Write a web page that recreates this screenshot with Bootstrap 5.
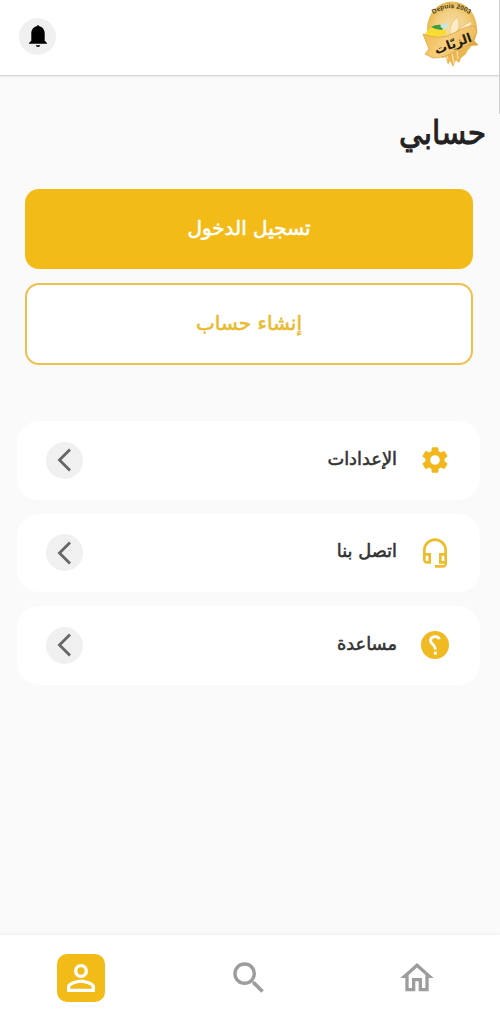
<!DOCTYPE html>
<html lang="ar" dir="rtl">
<head>
<meta charset="utf-8">
<meta name="viewport" content="width=device-width, initial-scale=1">
<title>حسابي</title>
<link href="https://cdn.jsdelivr.net/npm/bootstrap@5.3.0/dist/css/bootstrap.min.css" rel="stylesheet">
<style>
:root{--gold:#f2bb18}
body{background:#fafafa;font-family:"DejaVu Sans",sans-serif;color:#222;height:1024px;overflow:hidden}
.topbar{height:76px;border-bottom:1px solid #d4d4d4;box-shadow:0 1px 2px rgba(0,0,0,.08);padding:0 20px 3px 19px}
.round{width:37px;height:37px;background:#f0f0f0}
.page-title{font-family:"DejaVu Sans Condensed","DejaVu Sans",sans-serif;font-stretch:condensed;font-size:33px;line-height:40px;font-weight:400;-webkit-text-stroke:.9px currentColor;margin:37px 14px 0}
.actions{margin:36px 27px 0 25px;gap:14px}
.action{border-radius:14px;font-size:20px;font-weight:400;-webkit-text-stroke:.6px currentColor;border:0;padding:0 0 2px}
.action-login{height:80px;background:var(--gold)!important;color:#fff!important}
.action-join{height:82px;border:2px solid #eec04c;background:#fff!important;color:#eabb30!important}
.menu{margin:56px 20px 0 17px;gap:14px}
.menu-item{height:78.5px;border-radius:22px;padding:0 29px}
.menu-label{font-size:17.8px;font-weight:400;-webkit-text-stroke:.55px currentColor;color:#333;margin-right:22px;padding-bottom:2px}
.tabs{height:90px;border-top:1px solid #f3f3f3;box-shadow:0 -1px 3px rgba(0,0,0,.03);padding:0 63px 4px 57px}
.tab-search{margin-left:2px;margin-right:2px;padding-right:4px}
.tab-active{width:48px;height:48px;border-radius:10px;background:var(--gold)}
.scroll-thumb{width:1px;height:114px;background:#d0d0d0}
</style>
</head>
<body class="d-flex flex-column position-relative">
<div class="scroll-thumb position-absolute top-0 end-0" style="left:499px"></div>
<header class="topbar bg-white d-flex justify-content-between align-items-center flex-shrink-0">
  <svg class="align-self-start" width="60" height="68" viewBox="0 0 60 68" role="img" aria-label="الزيات">
    <defs>
      <radialGradient id="disc"><stop offset="0" stop-color="#f6dfae"/><stop offset=".65" stop-color="#f2d082"/><stop offset="1" stop-color="#e9ba50"/></radialGradient>
      <linearGradient id="ribbon" x2="1" y2=".3"><stop stop-color="#efb649"/><stop offset=".5" stop-color="#f6cf7e"/><stop offset="1" stop-color="#eebb5c"/></linearGradient>
      <path id="arc" d="M14 14Q31 2 49 14"/>
    </defs>
    <ellipse cx="32" cy="29" rx="25" ry="27.5" fill="url(#disc)"/>
    <path d="M18 52l4 6 4 -1 2 8 2-4 3 6 3-7 3 3 2-5 5-4 3-7z" fill="#e9b64f"/>
    <path d="M34 64l-2-11M38 59l-1-8M28 59l-2-7" stroke="#f8dda0" stroke-width="1.4"/>
    <path d="M31 38Q27 25 37 17Q43 25 33 40M34 38Q39 26 52 21Q51 33 34 40" fill="#fbebc6" stroke="#e3ba66" stroke-width=".7"/>
    <path d="M5 34Q10 25 23 25L27 34 6 40z" fill="#f8dc32"/>
    <path d="M11 27q7-4 14-1l-3 4q-6 0-11-3z" fill="#3d9b45"/><path d="M20 26q4-4 9-2l-5 6z" fill="#c9e5df"/>
    <path d="M3 34Q20 41 34 33T55 26L57 32 53 40 58 45Q47 44 36 51T13 58L5 54 9 49z" fill="url(#ribbon)" stroke="#dda342" stroke-width=".8"/>
    <path d="M53 40l-7 6 12-1z" fill="#dfa848"/>
    <text font-family="Liberation Sans, sans-serif" font-size="6.600" font-weight="700" fill="#4a4125" direction="ltr"><textPath href="#arc" startOffset="50%" text-anchor="middle">Depuis 2003</textPath></text>
    <text x="33" y="48" text-anchor="middle" transform="rotate(-20 33 44)" font-size="12.500" font-weight="700" fill="#211b0e">الزيّات</text>
  </svg>
  <button class="btn p-0 border-0 round rounded-circle d-flex align-items-center justify-content-center" aria-label="الإشعارات">
    <svg width="20" height="24" viewBox="0 0 20 24"><path d="M8.600 2.200a1.500 1.500 0 0 1 2.800 0C15 3 16.700 6 16.700 9.600v7.200l2.300 2.200v.8H1V19l2.300-2.200V9.600C3.300 6 5 3 8.600 2.200z"/><path d="M7.800 21.300h4.400a2.200 1.800 0 0 1-4.400 0z"/></svg>
  </button>
</header>
<main class="flex-grow-1">
  <h1 class="page-title">حسابي</h1>
  <div class="actions d-flex flex-column">
    <button class="btn action action-login">تسجيل الدخول</button>
    <button class="btn action action-join">إنشاء حساب</button>
  </div>
  <nav class="menu d-flex flex-column">
    <a class="menu-item bg-white d-flex align-items-center text-decoration-none" href="#">
      <svg width="32" height="32" viewBox="0 0 24 24" fill="#f2b81b"><path d="M19.140 12.940c.04-.3.060-.61.060-.94 0-.32-.02-.64-.07-.94l2.030-1.580c.18-.14.230-.41.120-.61l-1.920-3.320c-.12-.22-.37-.29-.59-.22l-2.390.96c-.5-.38-1.030-.7-1.620-.94l-.36-2.540c-.04-.24-.24-.41-.48-.41h-3.840c-.24 0-.43.17-.47.410l-.36 2.540c-.59.240-1.130.570-1.620.940l-2.390-.96c-.22-.08-.47 0-.59.220L2.740 8.870c-.12.210-.08.470.120.610l2.030 1.580c-.05.300-.09.630-.09.940s.02.640.070.940l-2.030 1.580c-.18.140-.23.410-.12.610l1.920 3.320c.12.220.37.290.59.220l2.390-.96c.5.380 1.030.700 1.620.940l.36 2.540c.05.240.24.410.48.410h3.840c.24 0 .44-.17.470-.41l.36-2.540c.59-.24 1.130-.56 1.620-.94l2.390.96c.22.080.47 0 .59-.22l1.920-3.320c.12-.22.070-.47-.12-.61zM12 15.600A3.600 3.600 0 1 1 12 8.400a3.600 3.600 0 0 1 0 7.200z"/></svg>
      <span class="menu-label">الإعدادات</span>
      <span class="round rounded-circle d-flex align-items-center justify-content-center me-auto"><svg width="16" height="24" viewBox="0 0 16 24" fill="none" stroke="#666" stroke-width="2.800"><path d="M13 1.500L2.500 12 13 22.500"/></svg></span>
    </a>
    <a class="menu-item bg-white d-flex align-items-center text-decoration-none" href="#">
      <svg width="32" height="32" viewBox="0 0 24 24" fill="#edbd2b"><path d="M12 1a9 9 0 0 0-9 9v7c0 1.660 1.340 3 3 3h3v-8H5v-2a7 7 0 0 1 14 0v2h-4v8h4v1h-7v2h6c1.660 0 3-1.340 3-3V10a9 9 0 0 0-9-9zM7 14v4H6c-.55 0-1-.45-1-1v-3zm12 4h-2v-4h2z"/></svg>
      <span class="menu-label">اتصل بنا</span>
      <span class="round rounded-circle d-flex align-items-center justify-content-center me-auto"><svg width="16" height="24" viewBox="0 0 16 24" fill="none" stroke="#666" stroke-width="2.800"><path d="M13 1.500L2.500 12 13 22.500"/></svg></span>
    </a>
    <a class="menu-item bg-white d-flex align-items-center text-decoration-none" href="#">
      <svg width="32" height="32" viewBox="0 0 24 24"><circle cx="12" cy="12" r="10.500" fill="#efba22"/><path d="M15.400 7.600A3.600 3.300 0 0 0 8.600 8.600C8.600 11.500 12.300 11.500 12.300 15.300" fill="none" stroke="#fff" stroke-width="2.100"/><path d="M11.200 17h2.200v2.200h-2.200z" fill="#fff"/></svg>
      <span class="menu-label">مساعدة</span>
      <span class="round rounded-circle d-flex align-items-center justify-content-center me-auto"><svg width="16" height="24" viewBox="0 0 16 24" fill="none" stroke="#666" stroke-width="2.800"><path d="M13 1.500L2.500 12 13 22.500"/></svg></span>
    </a>
  </nav>
</main>
<footer class="tabs bg-white d-flex align-items-center justify-content-between flex-shrink-0">
  <a href="#" aria-label="الرئيسية"><svg class="d-block" width="40" height="40" viewBox="0 0 24 24" fill="#9d9d9d"><path d="M12 5.690l5 4.500V18h-2v-6H9v6H7v-7.810l5-4.500M12 3L2 12h3v8h6v-6h2v6h6v-8h3z"/></svg></a>
  <a href="#" class="tab-search" aria-label="بحث"><svg class="d-block" width="42" height="42" viewBox="0 0 24 24" fill="#9d9d9d"><path d="M15.500 14h-.79l-.28-.27A6.471 6.471 0 0 0 16 9.500 6.500 6.500 0 1 0 9.500 16c1.610 0 3.090-.59 4.230-1.570l.27.280v.790l5 4.990L20.490 19zm-6 0C7.010 14 5 11.990 5 9.500S7.010 5 9.500 5 14 7.010 14 9.500 11.990 14 9.500 14z"/></svg></a>
  <a href="#" class="tab-active d-flex align-items-center justify-content-center" aria-label="حسابي"><svg width="42" height="42" viewBox="0 0 24 24" fill="#fff"><path d="M12 5.900a2.100 2.100 0 1 1 0 4.200 2.100 2.100 0 0 1 0-4.200m0 9c2.970 0 6.100 1.460 6.100 2.100v1.100H5.900V17c0-.64 3.130-2.100 6.100-2.100M12 4a4 4 0 1 0 0 8 4 4 0 0 0 0-8zm0 9c-2.670 0-8 1.340-8 4v3h16v-3c0-2.660-5.330-4-8-4z"/></svg></a>
</footer>
<script src="https://cdn.jsdelivr.net/npm/bootstrap@5.3.0/dist/js/bootstrap.bundle.min.js"></script>
</body>
</html>
